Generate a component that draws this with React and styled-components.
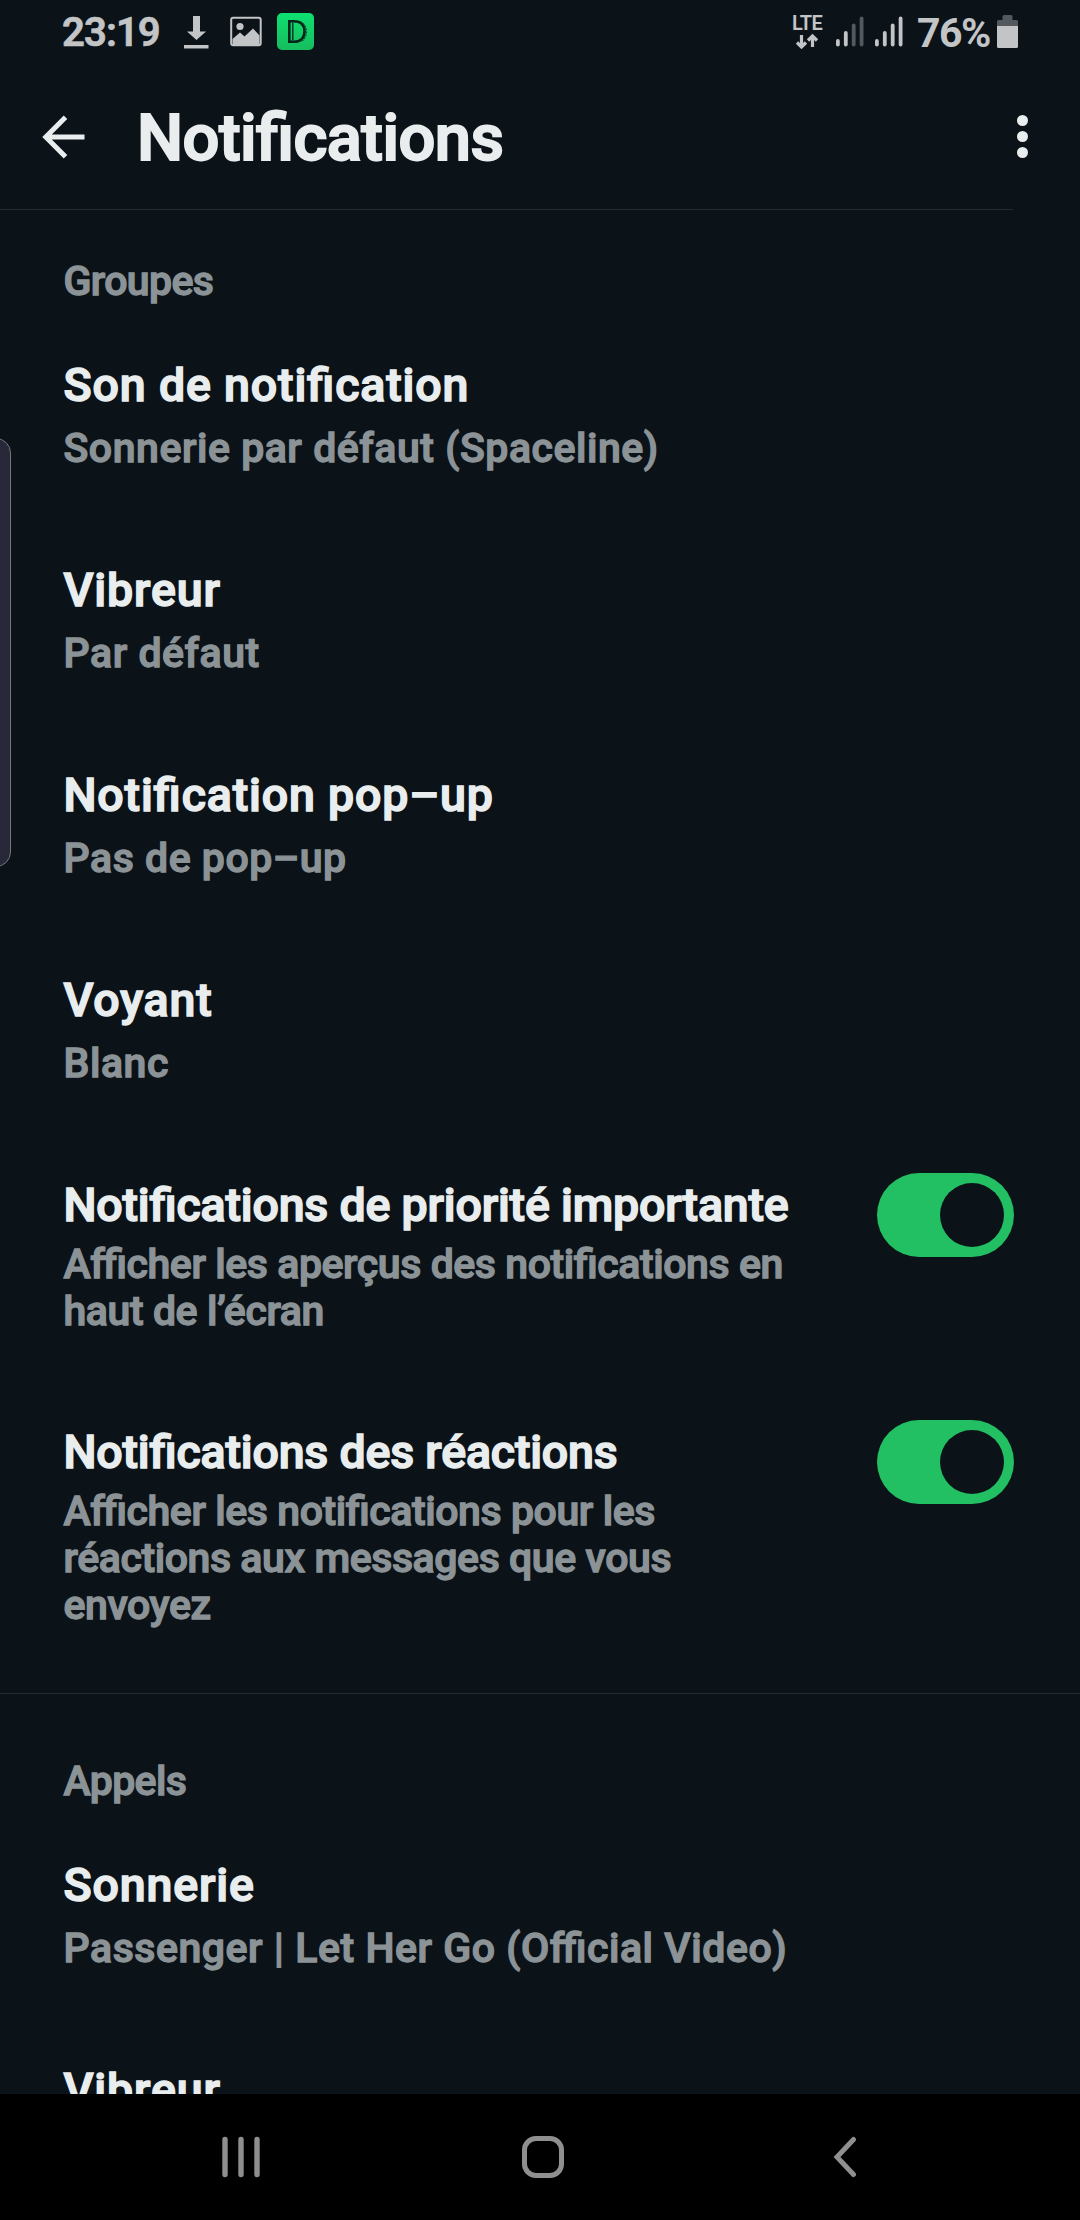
import React from "react";
import styled, { createGlobalStyle } from "styled-components";

const GlobalStyle = createGlobalStyle`
  * { box-sizing: border-box; }
  body { margin: 0; background: #0b1319; font-family: Roboto, "Noto Sans", sans-serif; }
`;

const Screen = styled.div`
  position: relative;
  display: flex;
  flex-direction: column;
  width: 1080px;
  height: 2220px;
  overflow: hidden;
  background: #0b1319;
`;

const StatusBar = styled.div`
  display: flex;
  justify-content: space-between;
  flex: none;
  height: 66px;
  padding: 0 62px 0 62px;
  color: #c3c4c6;
`;

const StatusGroup = styled.div`
  display: flex;
  align-items: flex-start;
`;

const Clock = styled.span`
  width: 121px;
  padding-top: 8px;
  font-size: 40px;
  line-height: 50px;
  font-weight: 600;
  letter-spacing: -0.9px;
  -webkit-text-stroke: 0.7px currentColor;
`;

const Percent = styled.span`
  width: 80px;
  padding-top: 8px;
  font-size: 41px;
  line-height: 50px;
  font-weight: 700;
  letter-spacing: -1.5px;
`;

const Network = styled.div`
  display: flex;
  flex-direction: column;
  align-items: center;
  width: 30px;
  margin-right: 14px;
  padding-top: 13px;
  font-size: 20px;
  line-height: 20px;
  font-weight: 600;
  letter-spacing: -0.6px;
`;

const AppBar = styled.header`
  display: flex;
  align-items: center;
  flex: none;
  height: 143px;
  padding: 0 52px 2px 42px;
  color: #e9edee;
`;

const Title = styled.h1`
  flex: 1;
  margin: 3px 0 0 52px;
  font-size: 65px;
  line-height: 80px;
  font-weight: 500;
  letter-spacing: -0.55px;
  font-feature-settings: "liga" 1;
  -webkit-text-stroke: 2px currentColor;
`;

const Dots = styled.div`
  display: flex;
  flex-direction: column;
  gap: 5px;
`;

const Dot = styled.span`
  width: 11px;
  height: 11px;
  border-radius: 50%;
  background: #e9edee;
`;

const Divider = styled.div`
  flex: none;
  height: 1px;
  margin-right: ${(p) => p.$inset || 0}px;
  background: #232a30;
`;

const Content = styled.main`
  flex: 1;
  min-height: 0;
  overflow: hidden;
`;

const Section = styled.section`
  padding: ${(p) => p.$top}px 66px ${(p) => p.$bottom || 0}px 63.5px;
`;

const SectionLabel = styled.h2`
  margin: 0;
  font-size: 41px;
  line-height: 48px;
  font-weight: 500;
  letter-spacing: -0.6px;
  -webkit-text-stroke: 1.3px currentColor;
  color: #8c9397;
`;

const Row = styled.div`
  display: flex;
  justify-content: space-between;
  padding-bottom: ${(p) => (p.$toggle ? 37 : 38)}px;
`;

const RowText = styled.div`
  display: flex;
  flex-direction: column;
  gap: ${(p) => (p.$toggle ? 8 : 11)}px;
  padding-top: 52px;
  white-space: nowrap;
`;

const RowTitle = styled.div`
  font-size: 46.5px;
  line-height: 56px;
  font-weight: 500;
  letter-spacing: ${(p) => (p.$toggle ? -0.18 : 0.85)}px;
  font-feature-settings: "liga" 1;
  -webkit-text-stroke: 1.5px currentColor;
  color: #e9edee;
`;

const RowSub = styled.div`
  font-size: 41px;
  line-height: ${(p) => (p.$toggle ? 47 : 48)}px;
  font-weight: 500;
  letter-spacing: ${(p) => (p.$toggle ? -0.42 : 0.54)}px;
  font-feature-settings: "liga" 1;
  -webkit-text-stroke: 1.3px currentColor;
  white-space: pre-line;
  color: #8c9397;
`;

const Switch = styled.div`
  display: flex;
  justify-content: flex-end;
  width: 137px;
  height: 84px;
  margin-top: 48px;
  padding: 10px;
  border-radius: 42px;
  background: #23c063;
`;

const Knob = styled.span`
  width: 64px;
  height: 64px;
  border-radius: 50%;
  background: #0b1319;
`;

const EdgeHandle = styled.div`
  position: absolute;
  left: -30px;
  top: 438px;
  width: 41px;
  height: 429px;
  border: 1px solid #74757c;
  border-radius: 15px;
  background: #282839;
`;

const NavBar = styled.nav`
  display: flex;
  align-items: center;
  flex: none;
  height: 126px;
  padding: 0 0 0 221px;
  background: #000;
`;

const Icon = styled.svg`
  display: block;
  flex: none;
  margin: ${(p) => p.$margin || 0};
`;

function Signal({ level, margin }) {
  const tops = [39, 31, 23.5, 16.5];
  return (
    <Icon width="28" height="50" viewBox="0 0 28 50" $margin={margin}>
      {tops.map((y, i) => (
        <rect key={y} x={i * 7.9} y={y} width="3.8" height={46.5 - y} rx="1.9" fill={i < level ? "#c3c4c6" : "#54595d"} />
      ))}
    </Icon>
  );
}

const groups = [
  { title: "Son de notification", sub: "Sonnerie par défaut (Spaceline)" },
  { title: "Vibreur", sub: "Par défaut" },
  { title: "Notification pop–up", sub: "Pas de pop–up" },
  { title: "Voyant", sub: "Blanc" },
  { title: "Notifications de priorité importante", sub: "Afficher les aperçus des notifications en\nhaut de l’écran", toggle: true },
  { title: "Notifications des réactions", sub: "Afficher les notifications pour les\nréactions aux messages que vous\nenvoyez", toggle: true },
];

const calls = [
  { title: "Sonnerie", sub: "Passenger | Let Her Go (Official Video)" },
  { title: "Vibreur" },
];

function Setting({ title, sub, toggle }) {
  return (
    <Row $toggle={toggle}>
      <RowText $toggle={toggle}>
        <RowTitle $toggle={toggle}>{title}</RowTitle>
        {sub && <RowSub $toggle={toggle}>{sub}</RowSub>}
      </RowText>
      {toggle && <Switch><Knob /></Switch>}
    </Row>
  );
}

export default function App() {
  return (
    <Screen>
      <GlobalStyle />
      <StatusBar>
        <StatusGroup>
          <Clock>23:19</Clock>
          <Icon width="26" height="50" viewBox="0 0 26 50" $margin="0 21px 0 0">
            <path d="M10 16h7v15.500h6L13.500 40 4 31.500h6zM1 45h24.500v3.500H1z" fill="#c3c4c6" />
          </Icon>
          <Icon width="32" height="50" viewBox="0 0 32 50" $margin="0 14px 0 0">
            <rect x="1.200" y="17.700" width="29.500" height="27.500" rx="2" fill="none" stroke="#c3c4c6" strokeWidth="2" />
            <circle cx="10" cy="26.500" r="3.600" fill="#c3c4c6" />
            <path d="M2.500 39l7.500-6.500 4.500 4 8.500-8L29.500 35.500v9.500h-27z" fill="#c3c4c6" />
          </Icon>
          <Icon width="38" height="50" viewBox="0 0 38 50">
            <defs>
              <linearGradient id="badge" x1="0" y1="0" x2="0" y2="1">
                <stop offset="0" stopColor="#0ee070" />
                <stop offset="1" stopColor="#17bd5f" />
              </linearGradient>
            </defs>
            <rect x="1" y="13" width="37" height="37" rx="5" fill="url(#badge)" />
            <path d="M13.300 21.200h4.500c7.500 0 10.700 4.700 10.700 10.300S25.300 41.800 17.800 41.800h-4.500z" fill="none" stroke="#04251a" strokeWidth="2.600" />
            <path d="M16.800 22.500v18" stroke="#04251a" strokeWidth="1.300" />
            <path d="M24.500 21.500c4 2 6 5.500 6 10s-2 8-5 10.500" fill="none" stroke="#04251a" strokeWidth="0.800" strokeDasharray="2 1" />
          </Icon>
        </StatusGroup>
        <StatusGroup>
          <Network>
            LTE
            <Icon width="24" height="16" viewBox="0 0 24 16">
              <path d="M6.500 2v12M2 9.500l4.500 4.500L11 9.500M17.500 14V3M13 7.500L17.500 3 22 7.500" fill="none" stroke="#c3c4c6" strokeWidth="3.200" />
            </Icon>
          </Network>
          <Signal level={2} margin="0 11px 0 0" />
          <Signal level={4} margin="0 14px 0 0" />
          <Percent>76%</Percent>
          <Icon width="21" height="50" viewBox="0 0 21 50">
            <path d="M0 27v-5.500a1.500 1.500 0 0 1 1.500-1.500h4v-3.500a1.500 1.500 0 0 1 1.500-1.500h7a1.500 1.500 0 0 1 1.500 1.500v3.500h4a1.500 1.500 0 0 1 1.500 1.500V27z" fill="#54595d" />
            <path d="M0 26h21v20.500a1.500 1.500 0 0 1-1.500 1.500h-18A1.500 1.500 0 0 1 0 46.500z" fill="#c3c4c6" />
          </Icon>
        </StatusGroup>
      </StatusBar>
      <AppBar>
        <Icon width="43" height="44" viewBox="0 0 43 44">
          <path d="M42.500 22H4M23.500 2.200L3.800 22l19.700 19.800" fill="none" stroke="#e9edee" strokeWidth="5" />
        </Icon>
        <Title>Notifications</Title>
        <Dots><Dot /><Dot /><Dot /></Dots>
      </AppBar>
      <Divider $inset={67} />
      <Content>
        <Section $top={47} $bottom={27}>
          <SectionLabel>Groupes</SectionLabel>
          {groups.map((g) => <Setting key={g.title} {...g} />)}
        </Section>
        <Divider />
        <Section $top={63}>
          <SectionLabel>Appels</SectionLabel>
          {calls.map((c) => <Setting key={c.title} {...c} />)}
        </Section>
      </Content>
      <NavBar>
        <Icon width="40" height="42" viewBox="0 0 40 42" $margin="0 261px 0 0">
          <path d="M4 3.500v35M20 3.500v35M36 3.500v35" stroke="#8f8f8f" strokeWidth="5.400" strokeLinecap="round" />
        </Icon>
        <Icon width="42" height="42" viewBox="0 0 42 42" $margin="0 269px 0 0">
          <rect x="2.500" y="2.500" width="37" height="37" rx="11.500" fill="none" stroke="#8f8f8f" strokeWidth="5" />
        </Icon>
        <Icon width="24" height="42" viewBox="0 0 24 42">
          <path d="M20.500 3.500L4 21l16.500 17.500" fill="none" stroke="#8f8f8f" strokeWidth="5" strokeLinecap="round" />
        </Icon>
      </NavBar>
      <EdgeHandle />
    </Screen>
  );
}
